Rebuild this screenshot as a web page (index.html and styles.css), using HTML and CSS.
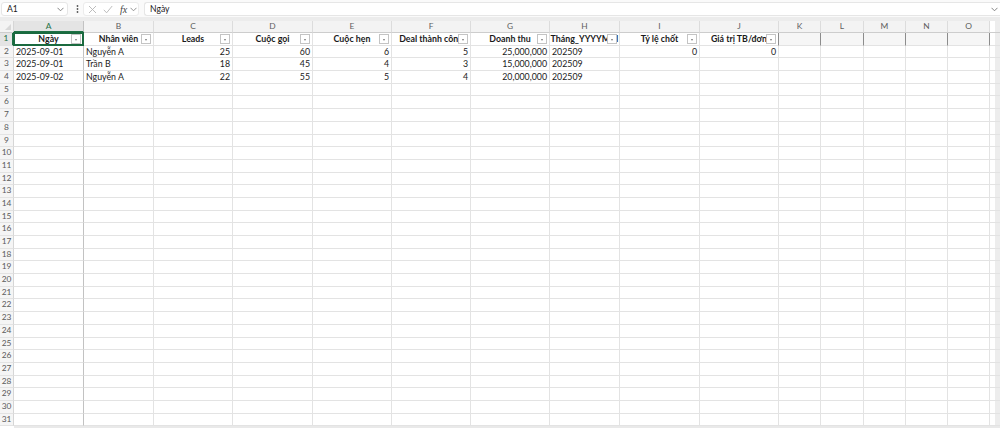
FILE: index.html
```html
<!DOCTYPE html>
<html lang="vi">
<head>
<meta charset="utf-8">
<title>Sheet</title>
<link rel="stylesheet" href="styles.css">
</head>
<body>
<div class="topbar">
  <div class="namebox"><span>A1</span><svg class="chev" width="7" height="5" viewBox="0 0 7 5"><path d="M0.5 0.8 L3.5 3.8 L6.5 0.8" fill="none" stroke="#777" stroke-width="0.9"/></svg></div>
  <svg class="dots" width="3" height="10" viewBox="0 0 3 10"><circle cx="1.5" cy="2" r="0.9" fill="#555"/><circle cx="1.5" cy="5" r="0.9" fill="#555"/><circle cx="1.5" cy="8" r="0.9" fill="#555"/></svg>
  <div class="fxgroup">
    <svg width="9" height="9" viewBox="0 0 9 9"><path d="M1 1 L8 8 M8 1 L1 8" stroke="#b5b5b5" stroke-width="0.9"/></svg>
    <svg width="10" height="9" viewBox="0 0 10 9"><path d="M0.8 4.8 L3.6 7.8 L9.2 1" fill="none" stroke="#b5b5b5" stroke-width="0.9"/></svg>
    <span class="fx">fx</span>
    <svg width="7" height="5" viewBox="0 0 7 5"><path d="M0.5 0.8 L3.5 3.8 L6.5 0.8" fill="none" stroke="#888" stroke-width="0.9"/></svg>
  </div>
  <div class="formula"><span>Ngày</span><svg width="7" height="5" viewBox="0 0 7 5"><path d="M0.5 0.8 L3.5 3.8 L6.5 0.8" fill="none" stroke="#777" stroke-width="0.9"/></svg></div>
</div>
<div class="band"></div>
<div class="sheet">
  <div class="r colhdr"><b class="corner"></b><i class="sel">A</i><i>B</i><i>C</i><i>D</i><i>E</i><i>F</i><i>G</i><i>H</i><i>I</i><i>J</i><i>K</i><i>L</i><i>M</i><i>N</i><i>O</i><i></i></div>
  <div class="r thead"><b class="sel">1</b><i class="f active">Ngày<u></u></i><i class="f">Nhân viên<u></u></i><i class="f">Leads<u></u></i><i class="f">Cuộc gọi<u></u></i><i class="f">Cuộc hẹn<u></u></i><i class="f">Deal thành công<u></u></i><i class="f">Doanh thu<u></u></i><i class="f">Tháng_YYYYMM<u></u></i><i class="f">Tỷ lệ chốt<u></u></i><i class="f edge">Giá trị TB/đơn<u></u></i><i class="x"></i><i class="x"></i><i class="x"></i><i class="x"></i><i class="x"></i><i></i></div>
  <div class="r"><b>2</b><i>2025-09-01</i><i>Nguyễn A</i><i class="n">25</i><i class="n">60</i><i class="n">6</i><i class="n">5</i><i class="n">25,000,000</i><i>202509</i><i class="n">0</i><i class="n">0</i><i></i><i></i><i></i><i></i><i></i><i></i></div>
  <div class="r"><b>3</b><i>2025-09-01</i><i>Trần B</i><i class="n">18</i><i class="n">45</i><i class="n">4</i><i class="n">3</i><i class="n">15,000,000</i><i>202509</i><i></i><i></i><i></i><i></i><i></i><i></i><i></i><i></i></div>
  <div class="r"><b>4</b><i>2025-09-02</i><i>Nguyễn A</i><i class="n">22</i><i class="n">55</i><i class="n">5</i><i class="n">4</i><i class="n">20,000,000</i><i>202509</i><i></i><i></i><i></i><i></i><i></i><i></i><i></i><i></i></div>
  <div class="r"><b>5</b><i></i><i></i><i></i><i></i><i></i><i></i><i></i><i></i><i></i><i></i><i></i><i></i><i></i><i></i><i></i><i></i></div>
  <div class="r"><b>6</b><i></i><i></i><i></i><i></i><i></i><i></i><i></i><i></i><i></i><i></i><i></i><i></i><i></i><i></i><i></i><i></i></div>
  <div class="r"><b>7</b><i></i><i></i><i></i><i></i><i></i><i></i><i></i><i></i><i></i><i></i><i></i><i></i><i></i><i></i><i></i><i></i></div>
  <div class="r"><b>8</b><i></i><i></i><i></i><i></i><i></i><i></i><i></i><i></i><i></i><i></i><i></i><i></i><i></i><i></i><i></i><i></i></div>
  <div class="r"><b>9</b><i></i><i></i><i></i><i></i><i></i><i></i><i></i><i></i><i></i><i></i><i></i><i></i><i></i><i></i><i></i><i></i></div>
  <div class="r"><b>10</b><i></i><i></i><i></i><i></i><i></i><i></i><i></i><i></i><i></i><i></i><i></i><i></i><i></i><i></i><i></i><i></i></div>
  <div class="r"><b>11</b><i></i><i></i><i></i><i></i><i></i><i></i><i></i><i></i><i></i><i></i><i></i><i></i><i></i><i></i><i></i><i></i></div>
  <div class="r"><b>12</b><i></i><i></i><i></i><i></i><i></i><i></i><i></i><i></i><i></i><i></i><i></i><i></i><i></i><i></i><i></i><i></i></div>
  <div class="r"><b>13</b><i></i><i></i><i></i><i></i><i></i><i></i><i></i><i></i><i></i><i></i><i></i><i></i><i></i><i></i><i></i><i></i></div>
  <div class="r"><b>14</b><i></i><i></i><i></i><i></i><i></i><i></i><i></i><i></i><i></i><i></i><i></i><i></i><i></i><i></i><i></i><i></i></div>
  <div class="r"><b>15</b><i></i><i></i><i></i><i></i><i></i><i></i><i></i><i></i><i></i><i></i><i></i><i></i><i></i><i></i><i></i><i></i></div>
  <div class="r"><b>16</b><i></i><i></i><i></i><i></i><i></i><i></i><i></i><i></i><i></i><i></i><i></i><i></i><i></i><i></i><i></i><i></i></div>
  <div class="r"><b>17</b><i></i><i></i><i></i><i></i><i></i><i></i><i></i><i></i><i></i><i></i><i></i><i></i><i></i><i></i><i></i><i></i></div>
  <div class="r"><b>18</b><i></i><i></i><i></i><i></i><i></i><i></i><i></i><i></i><i></i><i></i><i></i><i></i><i></i><i></i><i></i><i></i></div>
  <div class="r"><b>19</b><i></i><i></i><i></i><i></i><i></i><i></i><i></i><i></i><i></i><i></i><i></i><i></i><i></i><i></i><i></i><i></i></div>
  <div class="r"><b>20</b><i></i><i></i><i></i><i></i><i></i><i></i><i></i><i></i><i></i><i></i><i></i><i></i><i></i><i></i><i></i><i></i></div>
  <div class="r"><b>21</b><i></i><i></i><i></i><i></i><i></i><i></i><i></i><i></i><i></i><i></i><i></i><i></i><i></i><i></i><i></i><i></i></div>
  <div class="r"><b>22</b><i></i><i></i><i></i><i></i><i></i><i></i><i></i><i></i><i></i><i></i><i></i><i></i><i></i><i></i><i></i><i></i></div>
  <div class="r"><b>23</b><i></i><i></i><i></i><i></i><i></i><i></i><i></i><i></i><i></i><i></i><i></i><i></i><i></i><i></i><i></i><i></i></div>
  <div class="r"><b>24</b><i></i><i></i><i></i><i></i><i></i><i></i><i></i><i></i><i></i><i></i><i></i><i></i><i></i><i></i><i></i><i></i></div>
  <div class="r"><b>25</b><i></i><i></i><i></i><i></i><i></i><i></i><i></i><i></i><i></i><i></i><i></i><i></i><i></i><i></i><i></i><i></i></div>
  <div class="r"><b>26</b><i></i><i></i><i></i><i></i><i></i><i></i><i></i><i></i><i></i><i></i><i></i><i></i><i></i><i></i><i></i><i></i></div>
  <div class="r"><b>27</b><i></i><i></i><i></i><i></i><i></i><i></i><i></i><i></i><i></i><i></i><i></i><i></i><i></i><i></i><i></i><i></i></div>
  <div class="r"><b>28</b><i></i><i></i><i></i><i></i><i></i><i></i><i></i><i></i><i></i><i></i><i></i><i></i><i></i><i></i><i></i><i></i></div>
  <div class="r"><b>29</b><i></i><i></i><i></i><i></i><i></i><i></i><i></i><i></i><i></i><i></i><i></i><i></i><i></i><i></i><i></i><i></i></div>
  <div class="r"><b>30</b><i></i><i></i><i></i><i></i><i></i><i></i><i></i><i></i><i></i><i></i><i></i><i></i><i></i><i></i><i></i><i></i></div>
  <div class="r"><b>31</b><i></i><i></i><i></i><i></i><i></i><i></i><i></i><i></i><i></i><i></i><i></i><i></i><i></i><i></i><i></i><i></i></div>
</div>
<div class="hscroll"><span></span></div>
</body>
</html>
```
FILE: styles.css
```css
html, body {
  margin: 0;
  padding: 0;
  background: #ffffff;
  overflow: hidden;
  width: 1000px;
  height: 428px;
}
body {
  font-family: Lato, "Liberation Sans", sans-serif;
  color: #1a1a1a;
  --cols: 14px 70px 70px 79px 80px 79px 79px 79px 70px 80px 79px 42px 43px 42px 42px 42px 10px;
}

/* formula bar */
.topbar {
  height: 17px;
  display: flex;
  align-items: center;
  background: #fafafa;
  box-sizing: border-box;
  padding-top: 1px;
}
.namebox {
  width: 67px;
  height: 14px;
  margin-left: 1px;
  background: #fff;
  border: 1px solid #e6e6e6;
  border-radius: 3px;
  box-sizing: border-box;
  display: flex;
  align-items: center;
  justify-content: space-between;
  padding: 0 3px 0 5px;
  font-size: 8.6px;
}
.dots { margin-left: 8px; }
.fxgroup {
  margin-left: 4px;
  width: 56px;
  height: 14px;
  background: #fff;
  border: 1px solid #ececec;
  border-radius: 3px;
  box-sizing: border-box;
  display: flex;
  align-items: center;
  gap: 6px;
  padding-left: 4px;
}
.fx {
  font-family: "Liberation Serif", serif;
  font-style: italic;
  font-size: 10px;
  color: #444;
  margin-left: 1px;
  margin-right: -3px;
}
.formula {
  flex: 1;
  margin-left: 5px;
  height: 14px;
  background: #fff;
  border: 1px solid #e6e6e6;
  border-right: none;
  border-radius: 3px 0 0 3px;
  box-sizing: border-box;
  display: flex;
  align-items: center;
  justify-content: space-between;
  padding: 0 2px 0 5px;
  font-size: 8.6px;
}
.band {
  height: 4px;
  background: #ececec;
}

/* sheet grid */
.r {
  display: grid;
  grid-template-columns: var(--cols);
  height: 12.7px;
  font-size: 8.8px;
  line-height: 11.7px;
}
.r i, .r b {
  font-style: normal;
  font-weight: normal;
  display: block;
  box-sizing: border-box;
  border-right: 1px solid #e3e3e3;
  border-bottom: 1px solid #e3e3e3;
  overflow: hidden;
  white-space: nowrap;
  padding: 0 2px;
  position: relative;
}
.r i:nth-child(2) {
  border-right: 1.6px solid #c2c2c2;
}
.r i:last-child {
  border-right: none;
  background: linear-gradient(to right, #fff 0, #fff 5px, #ededed 5px);
}
.r i.n { text-align: right; }
.r b {
  background: #f5f5f5;
  color: #5a5a5a;
  font-size: 8.4px;
  text-align: center;
  padding: 0;
  border-right: 1px solid #d6d6d6;
}

/* column header row */
.colhdr {
  height: 12px;
  line-height: 11px;
  font-size: 8.4px;
}
.colhdr i {
  background: #f3f3f3;
  color: #606060;
  text-align: center;
  border-right: 1px solid #dcdcdc;
  border-bottom: 1px solid #cdcdcd;
}
.colhdr i.sel {
  background: #e4e4e4;
  color: #1e7145;
  border-bottom: 2px solid #1e7145;
  line-height: 10px;
}
.colhdr b.corner {
  background: #f3f3f3;
  border-bottom: 1px solid #cdcdcd;
}
.colhdr b.corner::after {
  content: "";
  position: absolute;
  right: 2px;
  bottom: 2px;
  width: 0;
  height: 0;
  border-left: 6px solid transparent;
  border-bottom: 6px solid #d8d8d8;
}

/* table header row */
.thead b.sel {
  color: #1e7145;
  background: #e4e4e4;
  border-right: 2px solid #1e7145;
}
.thead i.f {
  font-weight: bold;
  text-align: center;
  padding: 0;
}
.thead i.f u {
  position: absolute;
  right: 2px;
  top: 1px;
  width: 10px;
  height: 10px;
  box-sizing: border-box;
  background: #fff;
  border: 1px solid #c4c4c4;
}
.thead i.f u::after {
  content: "";
  position: absolute;
  left: 3px;
  top: 4px;
  border-left: 1.5px solid transparent;
  border-right: 1.5px solid transparent;
  border-top: 2px solid #777;
}
.thead i.f.active {
  overflow: visible;
}
.thead i.f.active::after {
  content: "";
  position: absolute;
  left: -1px;
  top: -1px;
  right: -1px;
  bottom: -1px;
  border: 2px solid #1a6a3f;
  pointer-events: none;
}
.thead i.edge {
  border-right: 1px solid #8c8c8c;
}
.thead i.x {
  background: #f6f6f6;
  border-right: 1px solid #8c8c8c;
}

/* bottom scrollbar strip */
.hscroll {
  height: 2px;
  margin-left: 14px;
  background: #e9e9e9;
}
```
